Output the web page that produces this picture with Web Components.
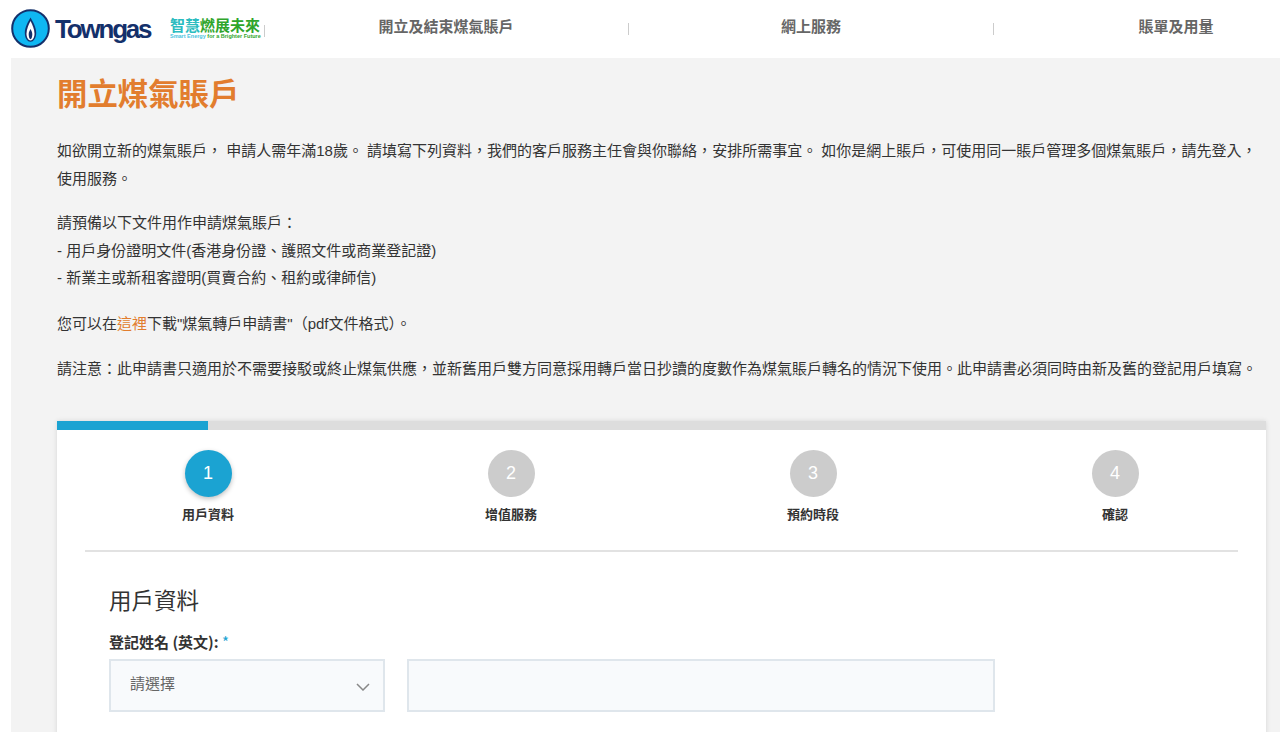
<!DOCTYPE html>
<html lang="zh-Hant">
<head>
<meta charset="UTF-8">
<title>開立煤氣賬戶</title>
<style>
  html, body { margin: 0; padding: 0; background: #fff; overflow: hidden; height: 732px; }
  body { font-family: "Liberation Sans", "Noto Sans CJK TC", sans-serif; }
</style>
</head>
<body>
<tg-header></tg-header>
<tg-page>
  <tg-intro></tg-intro>
  <tg-card></tg-card>
</tg-page>
<script>
  class TgHeader extends HTMLElement {
    constructor() {
      super()
      const shadow = this.attachShadow({mode: 'open'})
      shadow.innerHTML = `
        <style>
          :host { display: flex; height: 58px; background: #fff; align-items: center; overflow: hidden; }
          .logo { display: flex; align-items: center; padding-left: 11px; width: 264px; box-sizing: border-box; flex: none; }
          svg { flex: none; margin-top: -1px; }
          .word { font-family: "Liberation Sans", sans-serif; font-size: 26px; font-weight: 700; letter-spacing: -2.2px; color: #14306b; margin-left: 5px; width: 115px; flex: none; line-height: 1; }
          .tag { width: 94px; flex: none; display: flex; flex-direction: column; margin-top: -2px; }
          .tag b { font: 700 15px/16px "Noto Sans CJK TC", sans-serif; white-space: nowrap; color: #2fa52b; }
          .tag b span { color: #2bbcc0; }
          .tag small { font: 700 5.500px/6px "Liberation Sans", sans-serif; white-space: nowrap; color: #2fa52b; }
          .tag small span { color: #4cc3e0; }
          .rule { width: 1px; height: 12px; background: #ccc; flex: none; }
          .logo .rule { margin-top: 3px; }
          nav { flex: none; display: flex; align-items: center; }
          .item { flex: none; width: 364px; margin-top: -6px; text-align: center; font: 700 15px/20px "Noto Sans CJK TC", sans-serif; color: #666; }
        </style>
        <div class="logo">
          <svg width="39" height="39" viewBox="0 0 39 39">
            <circle cx="19.500" cy="19.500" r="18.300" fill="#0fb7f2" stroke="#14306b" stroke-width="2"/>
            <path d="M19.500 8.500C22 13 25.200 18 25.200 24c0 5-2.600 8.800-5.700 8.800S13.800 29 13.800 24c0-6 3.200-11 5.700-15.500z" fill="#14306b"/>
            <path d="M19.500 12c1.800 3.500 4 8 4 12.500 0 4-1.800 7-4 7s-4-3-4-7c0-4.500 2.200-9 4-12.500z" fill="#fff"/>
            <path d="M19.500 20c.9 1.700 1.800 3.400 1.800 5.200 0 2.400-.8 5-1.800 5s-1.800-2.600-1.800-5c0-1.800.9-3.500 1.800-5.200z" fill="#14306b"/>
          </svg>
          <span class="word">Towngas</span>
          <div class="tag">
            <b><span>智慧</span>燃展未來</b>
            <small><span>Smart Energy</span> for a Brighter Future</small>
          </div>
          <i class="rule"></i>
        </div>
        <nav>
          <div class="item">開立及結束煤氣賬戶</div>
          <i class="rule"></i>
          <div class="item">網上服務</div>
          <i class="rule"></i>
          <div class="item">賬單及用量</div>
        </nav>
      `
    }
  }
  customElements.define('tg-header', TgHeader)

  class TgPage extends HTMLElement {
    constructor() {
      super()
      const shadow = this.attachShadow({mode: 'open'})
      shadow.innerHTML = `
        <style>
          :host { display: block; margin-left: 11px; background: #f3f3f3; padding: 0 14px 0 46px; height: 674px; overflow: hidden; }
        </style>
        <slot></slot>
      `
    }
  }
  customElements.define('tg-page', TgPage)

  class TgIntro extends HTMLElement {
    constructor() {
      super()
      const shadow = this.attachShadow({mode: 'open'})
      shadow.innerHTML = `
        <style>
          :host { display: block; color: #333; font: 400 15px/27.500px "Liberation Sans", "Noto Sans CJK TC", sans-serif; }
          h1 { margin: 0; padding-top: 13px; height: 62px; box-sizing: border-box; font: 700 30.400px/42px "Noto Sans CJK TC", sans-serif; color: #e27d2e; }
          p { margin: 0 0 18px; }
          .first { padding-top: 17px; margin-bottom: 17px; }
          a { color: #e27d2e; text-decoration: none; }
          .pt { font-style: normal; font-family: "Noto Sans CJK SC", sans-serif; line-height: 0; }
        </style>
        <h1>開立煤氣賬戶</h1>
        <p class="first">如欲開立新的煤氣賬戶， 申請人需年滿18歲。 請填寫下列資料，我們的客戶服務主任會與你聯絡，安排所需事宜。 如你是網上賬戶，可使用同一賬戶管理多個煤氣賬戶，請先登入，使用服務。</p>
        <p>請預備以下文件用作申請煤氣賬戶：<br>- 用戶身份證明文件(香港身份證、護照文件或商業登記證)<br>- 新業主或新租客證明(買賣合約、租約或律師信)</p>
        <p>您可以在<a>這裡</a>下載"煤氣轉戶申請書"（pdf文件格式）。</p>
        <p>請注意：此申請書只適用於不需要接駁或終止煤氣供應，並新舊用戶雙方同意採用轉戶當日抄讀的度數作為煤氣賬戶轉名的情況下使用。此申請書必須同時由新及舊的登記用戶填寫。</p>
      `
      // the reference sets its punctuation low and left, which the TC face doesn't
      shadow.querySelectorAll('p').forEach(p => {
        p.innerHTML = p.innerHTML.replace(/[，。：、]/g, m => `<i class="pt">${m}</i>`)
      })
    }
  }
  customElements.define('tg-intro', TgIntro)

  class TgStep extends HTMLElement {
    constructor() {
      super()
      const shadow = this.attachShadow({mode: 'open'})
      shadow.innerHTML = `
        <style>
          :host { display: flex; flex-direction: column; align-items: center; }
          :host([active]) { margin-right: 2px; }
          .dot { width: 47px; height: 47px; border-radius: 50%; background: #ccc; color: #fff; display: flex; align-items: center; justify-content: center; font: 400 18px "Liberation Sans", sans-serif; }
          :host([active]) .dot { background: #1ba3d2; box-shadow: 0 2px 5px rgba(0,0,0,.25); }
          .label { margin-top: 8px; font: 700 13px/18px "Noto Sans CJK TC", sans-serif; color: #333; }
        </style>
        <div class="dot"></div>
        <div class="label"><slot></slot></div>
      `
      shadow.querySelector('.dot').textContent = this.getAttribute('num')
    }
  }
  customElements.define('tg-step', TgStep)

  class TgField extends HTMLElement {
    constructor() {
      super()
      const shadow = this.attachShadow({mode: 'open'})
      shadow.innerHTML = `
        <style>
          :host { display: block; height: 53px; box-sizing: border-box; background: #f8fafc; border: 2px solid #dfe6ec; font: 400 15px "Noto Sans CJK TC", sans-serif; color: #666; }
          .in { display: flex; align-items: center; justify-content: space-between; height: 100%; padding: 0 13px 0 19px; }
          svg { margin-top: 4px; }
          span { margin-top: -6px; }
        </style>
        <div class="in"><span><slot></slot></span>
        ${this.hasAttribute('select') ? '<svg width="14" height="8" viewBox="0 0 14 8"><path d="M1 1l6 6 6-6" fill="none" stroke="#888" stroke-width="1.500"/></svg>' : ''}</div>
      `
    }
  }
  customElements.define('tg-field', TgField)

  class TgCard extends HTMLElement {
    constructor() {
      super()
      const shadow = this.attachShadow({mode: 'open'})
      shadow.innerHTML = `
        <style>
          :host { display: block; margin-top: 38px; background: #fff; border-radius: 0 0 4px 4px; box-shadow: 0 0 5px rgba(0,0,0,.12); font-family: "Noto Sans CJK TC", sans-serif; color: #333; height: 340px; }
          .bar { height: 9px; background: #ddd; }
          .bar div { width: 12.500%; height: 100%; background: #1ba3d2; }
          .steps { display: grid; padding: 20px 0 0 1px; height: 122px; box-sizing: border-box; border-bottom: 2px solid #e2e2e2; margin: 0 28px; grid-template-columns: repeat(4, 302px); justify-content: center; }
          .body { padding: 0 52px; }
          h2 { margin: 0; padding-top: 30px; font: 400 22.500px/34px "Noto Sans CJK TC", sans-serif; color: #333; }
          label { display: block; margin-top: 15px; font: 700 15px/21px "Noto Sans CJK TC", sans-serif; color: #333; }
          label em { font-style: normal; font-weight: 400; color: #1ba3d2; }
          .row { display: flex; gap: 22px; margin-top: 7px; }
          .row tg-field:nth-child(1) { width: 276px; }
          .row tg-field:nth-child(2) { width: 588px; }
        </style>
        <div class="bar"><div></div></div>
        <div class="steps">
          <tg-step num="1" active>用戶資料</tg-step>
          <tg-step num="2">增值服務</tg-step>
          <tg-step num="3">預約時段</tg-step>
          <tg-step num="4">確認</tg-step>
        </div>
        <div class="body">
          <h2>用戶資料</h2>
          <label>登記姓名 (英文): <em>*</em></label>
          <div class="row">
            <tg-field select>請選擇</tg-field>
            <tg-field></tg-field>
          </div>
        </div>
      `
    }
  }
  customElements.define('tg-card', TgCard)
</script>
</body>
</html>
